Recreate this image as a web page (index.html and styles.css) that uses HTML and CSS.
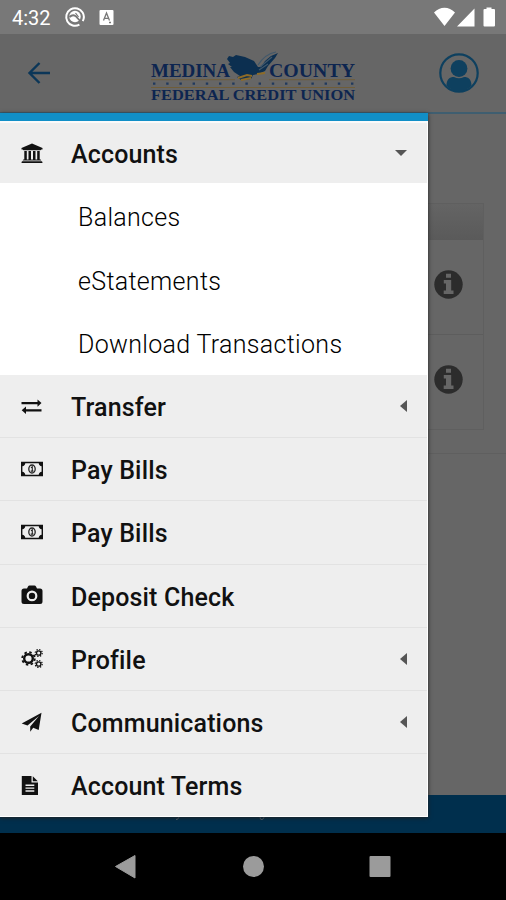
FILE: index.html
```
<!DOCTYPE html>
<html lang="en">
<head>
<meta charset="utf-8">
<title>Medina County Federal Credit Union</title>
<link rel="stylesheet" href="styles.css">
</head>
<body>
<svg class="defs" aria-hidden="true">
  <symbol id="info" viewBox="0 0 29 29"><circle cx="14.5" cy="14.5" r="14.2" fill="#2c2c2c"/><path fill="#666" d="M12 3.8h5v4h-5zM9.8 10h7.4v10.5h2.3V24H9.7v-3.5H12v-7H9.8z"/></symbol>
  <symbol id="money" viewBox="0 0 22 16"><path fill="#111" fill-rule="evenodd" d="M0 .8h22v14.4H0zM4.300 2.200C4 4 3 5 1.400 5.200v5.600C3 11 4 12 4.300 13.800h13.400c.3-1.800 1.300-2.800 2.900-3V5.200C19 5 18 4 17.700 2.200z"/><ellipse cx="11" cy="8" rx="3.200" ry="4" fill="none" stroke="#222" stroke-width="1.300"/><path d="M10 6.700l1.300-.9v4M9.700 10.100h2.800" fill="none" stroke="#222" stroke-width="1.100"/></symbol>
</svg>
<div class="screen">
  <div class="status">
    <span class="clock">4:32</span>
    <svg class="st-left" viewBox="0 0 52 22"><circle cx="11" cy="11" r="8.800" fill="none" stroke="#fff" stroke-width="2" stroke-dasharray="50 5.300" transform="rotate(60 11 11)"/><circle cx="11" cy="10.500" r="5.700" fill="#fff"/><path d="M5.500 11q3-3 6-1l7 7.500" stroke="#777" stroke-width="1.800" fill="none"/><path d="M11.500 7l3 4" stroke="#777" stroke-width="1.200"/><rect x="35.500" y="4" width="14" height="15" rx="1" fill="#fff"/><path d="M39.500 14.500l3-7.500 3 7.500M40.500 12.300h4M45 16.500h2" fill="none" stroke="#777" stroke-width="1.300"/></svg>
    <svg class="st-right" viewBox="0 0 64 22"><path fill="#fff" d="M0 6.500C6 .2 15 .2 21 6.500L10.500 20zM23 20.500L40.500 2.500v18zM52.500 3V1.500h5V3H60q1 0 1 1v15.500q0 1-1 1H50.500q-1 0-1-1V4q0-1 1-1z"/></svg>
  </div>
  <header class="header">
    <svg class="back" viewBox="0 0 24 24"><path d="M23 12H3M12.500 2L2.500 12l10 10" fill="none" stroke="#0b3658" stroke-width="2.400"/></svg>
    <svg class="logo" viewBox="0 0 206 56">
      <g font-family="Liberation Serif, serif" font-weight="bold" fill="#0d2550">
        <text x="0" y="28" font-size="19" textLength="79" lengthAdjust="spacingAndGlyphs">MEDINA</text>
        <text x="118" y="28" font-size="19" textLength="86" lengthAdjust="spacingAndGlyphs">COUNTY</text>
        <text x="0" y="51" font-size="15.500" textLength="204" lengthAdjust="spacingAndGlyphs">FEDERAL CREDIT UNION</text>
      </g>
      <path d="M0 30.700h84M118 30.700h86M0 38.500h204" stroke="#715c34" stroke-width=".9"/>
      <path d="M2 34.700h202" stroke="#20395c" stroke-width="2.200" stroke-dasharray="2.400 10.800"/>
      <path fill="#0c2f50" d="M76 10l2-3 4 1 3-2 9 2 9 4 4 6 3 0 4-6 6-5 7-3-3 5-7 8-3 5-7 3-5 1-2 4-10 1-4-3 3-1-6-4-4-5 2 0-4-3 2-1z"/>
      <path d="M107 16q7-11 18-13M109 18l12-10M108 21l9-6" stroke="#41586b" stroke-width="1.200" fill="none"/>
      <path d="M87 29l9-3 5 1M106 25l8-1M90 31l10-2" stroke="#8d6b27" stroke-width="1.900" fill="none"/>
    </svg>
    <svg class="user" viewBox="0 0 40 40"><circle cx="20" cy="20" r="18.700" fill="none" stroke="#0e405f" stroke-width="2.200"/><circle cx="20" cy="15.500" r="8.400" fill="#0e405f"/><path fill="#0e405f" d="M7.500 32.500c0-6 3-8.500 7.500-8.500q5 2.600 10 0c4.500 0 7.500 2.500 7.500 8.500Q27 38.500 20 38.500T7.500 32.500z"/></svg>
  </header>
  <main class="content">
    <section class="panel">
      <div class="panel-head"></div>
      <div class="panel-row"><svg class="info"><use href="#info"/></svg></div>
      <div class="panel-row"><svg class="info"><use href="#info"/></svg></div>
    </section>
    <div class="rule"></div>
  </main>
  <footer class="footer"><svg class="footer-marks" viewBox="0 0 90 4"><path d="M1 2.500q2 .5 3-2.500M85 0q0 3 2 2.500t2-2.500" fill="none" stroke="#596775"/></svg></footer>
  <div class="navbar">
    <svg viewBox="0 0 506 66"><path d="M115.500 33.500L135 22.500V45z" fill="#9b9b9b" stroke="#9b9b9b" stroke-linejoin="round"/><circle cx="253.500" cy="33.500" r="10.500" fill="#9b9b9b"/><rect x="369.500" y="23" width="21" height="21" rx="1" fill="#9b9b9b"/></svg>
  </div>
  <nav class="drawer">
    <div class="item first">
      <svg class="icon" viewBox="0 0 22 22"><path fill="#111" d="M11 .5L21.500 5v1.500h-1.300q0 .8-1 .8H2.800q-1 0-1-.8H.5V5zM3.300 8h2.500v8.500h1.700V8H10v8.500h2V8h2.500v8.500h1.700V8h2.500v8.500h.7q.8 0 .8 1H1.800q0-1 .8-1h.7zM1.300 18.300h19.400q.8 0 .8 1.700H.5q0-1.700.8-1.700z"/></svg>
      <span class="label">Accounts</span><span class="caret down"></span>
    </div>
    <div class="sub">Balances</div>
    <div class="sub">eStatements</div>
    <div class="sub">Download Transactions</div>
    <div class="item">
      <svg class="icon" viewBox="0 0 22 22"><path fill="#111" d="M.5 6h16V3.500l4 3.600-4 3.600V8.200H.5zM20.500 13.200H5v-2.600L.7 14.300 5 18v-2.600h15.500z"/></svg>
      <span class="label">Transfer</span><span class="caret"></span>
    </div>
    <div class="item">
      <svg class="icon money"><use href="#money"/></svg>
      <span class="label">Pay Bills</span>
    </div>
    <div class="item">
      <svg class="icon money"><use href="#money"/></svg>
      <span class="label">Pay Bills</span>
    </div>
    <div class="item">
      <svg class="icon" viewBox="0 0 22 22"><path fill="#111" fill-rule="evenodd" d="M3 3.500h3l1-2Q7.500.5 8.500.5h5q1 0 1.500 1l1 2h3q2.500 0 2.500 2.500v10.500Q21.500 19 19 19H3Q.5 19 .5 16.500V6Q.5 3.500 3 3.500zM11 5.500a5.400 5.400 0 1 0 0 10.800 5.400 5.400 0 0 0 0-10.800zm0 2.200a3.200 3.200 0 1 1 0 6.400 3.200 3.200 0 0 1 0-6.400z"/></svg>
      <span class="label">Deposit Check</span>
    </div>
    <div class="item">
      <svg class="icon" viewBox="0 0 22 22"><g fill="none" stroke="#111"><circle cx="7.500" cy="10.500" r="4.300" stroke-width="2.400"/><circle cx="7.500" cy="10.500" r="6.300" stroke-width="1.800" stroke-dasharray="2.475 2.475"/><circle cx="17.700" cy="5" r="2.200" stroke-width="1.300"/><circle cx="17.700" cy="5" r="3.500" stroke-width="1.200" stroke-dasharray="1.375 1.375"/><circle cx="17.700" cy="16" r="2.200" stroke-width="1.300"/><circle cx="17.700" cy="16" r="3.500" stroke-width="1.200" stroke-dasharray="1.375 1.375"/></g></svg>
      <span class="label">Profile</span><span class="caret"></span>
    </div>
    <div class="item">
      <svg class="icon" viewBox="0 0 22 22"><path fill="#111" d="M20.500.8L17.700 18l-5.500-2.300-3 4V14.500L18 4 6.500 13.600.7 11.400z"/></svg>
      <span class="label">Communications</span><span class="caret"></span>
    </div>
    <div class="item">
      <svg class="icon" viewBox="0 0 22 22"><path fill="#111" fill-rule="evenodd" d="M.8 1h9.700v6.500H17V20H.8zM11.800 1.200L16.800 6.300h-5zM4.500 9.500v1.400h8.800V9.500zm0 2.900v1.400h8.800v-1.400zm0 2.900v1.400h8.800v-1.400z"/></svg>
      <span class="label">Account Terms</span>
    </div>
  </nav>
</div>
</body>
</html>
```
FILE: styles.css
```
* { box-sizing: border-box; }
body { margin: 0; font-family: Roboto, "Liberation Sans", sans-serif; }
svg { display: block; flex: none; }
.defs { position: absolute; width: 0; height: 0; }
.screen { position: relative; width: 506px; height: 900px; display: flex; flex-direction: column; overflow: hidden; background: #666; }
.status { height: 34px; flex: none; background: #787878; display: flex; align-items: center; padding: 0 8px 0 12px; }
.clock { width: 52px; color: #fff; font-size: 20px; line-height: 34px; padding-top: 1px; }
.st-left { width: 52px; height: 22px; margin-top: 0; }
.st-right { width: 64px; height: 22px; margin-left: auto; }
.header { height: 80px; flex: none; display: flex; align-items: center; border-bottom: 2px solid #3f5e70; padding: 0 27px 0 26px; }
.back { width: 26px; height: 24px; }
.logo { width: 206px; height: 56px; margin: 8px 0 0 99px; }
.user { width: 40px; height: 40px; margin-left: auto; }
.content { flex: 1; padding-top: 89px; }
.panel { width: 460px; height: 227px; margin-left: 24px; border: 1px solid #5f5f5f; }
.panel-head { height: 36px; background: linear-gradient(#646464, #5a5a5a); }
.panel-row { height: 95px; padding: 30px 20px 0 0; border-bottom: 1px solid #5d5d5d; }
.panel-row:last-child { border: 0; }
.info { width: 29px; height: 29px; margin-left: auto; }
.rule { height: 1px; margin-top: 23px; background: #5f5f5f; }
.footer { height: 38px; flex: none; background: #002f4d; padding: 22px 0 0 175px; }
.footer-marks { width: 90px; height: 4px; }
.navbar { height: 67px; flex: none; background: #000; }
.navbar svg { width: 506px; height: 66px; }
.drawer { position: absolute; left: 0; top: 113px; width: 428px; height: 704px; display: grid; grid-template-rows: 62px repeat(3, 64px) repeat(7, 63.200px); border-top: 8px solid #118fc7; background: #fff; box-shadow: 0 1px 4px #222; }
.item { display: flex; align-items: center; background: #eee; border-bottom: 1px solid #e2e2e2; margin-right: 1px; padding: 4px 18px 0 21px; }
.item.first { border-top: 2px solid #fafafa; border-bottom: 0; padding-top: 4px; }
.item:last-child { border-bottom: 1px solid #fff; }
.icon { width: 22px; height: 22px; margin-top: -3px; }
.icon.money { height: 16px; margin-top: -5px; }
.label { margin-left: 28px; font-size: 25px; font-weight: 500; line-height: 32px; color: #111; letter-spacing: .15px; }
.sub { padding: 4px 0 0 78px; display: flex; align-items: center; font-size: 25px; font-weight: 300; color: #000; letter-spacing: .32px; }
.sub:nth-child(4) { padding-top: 2px; }
.caret { margin: -4px 2px 0 auto; border: 6px solid transparent; border-left-width: 0; border-right: 7px solid #555; }
.caret.down { margin: -4px 2px 0 auto; border: 6px solid transparent; border-bottom-width: 0; border-top-color: #555; }
```
